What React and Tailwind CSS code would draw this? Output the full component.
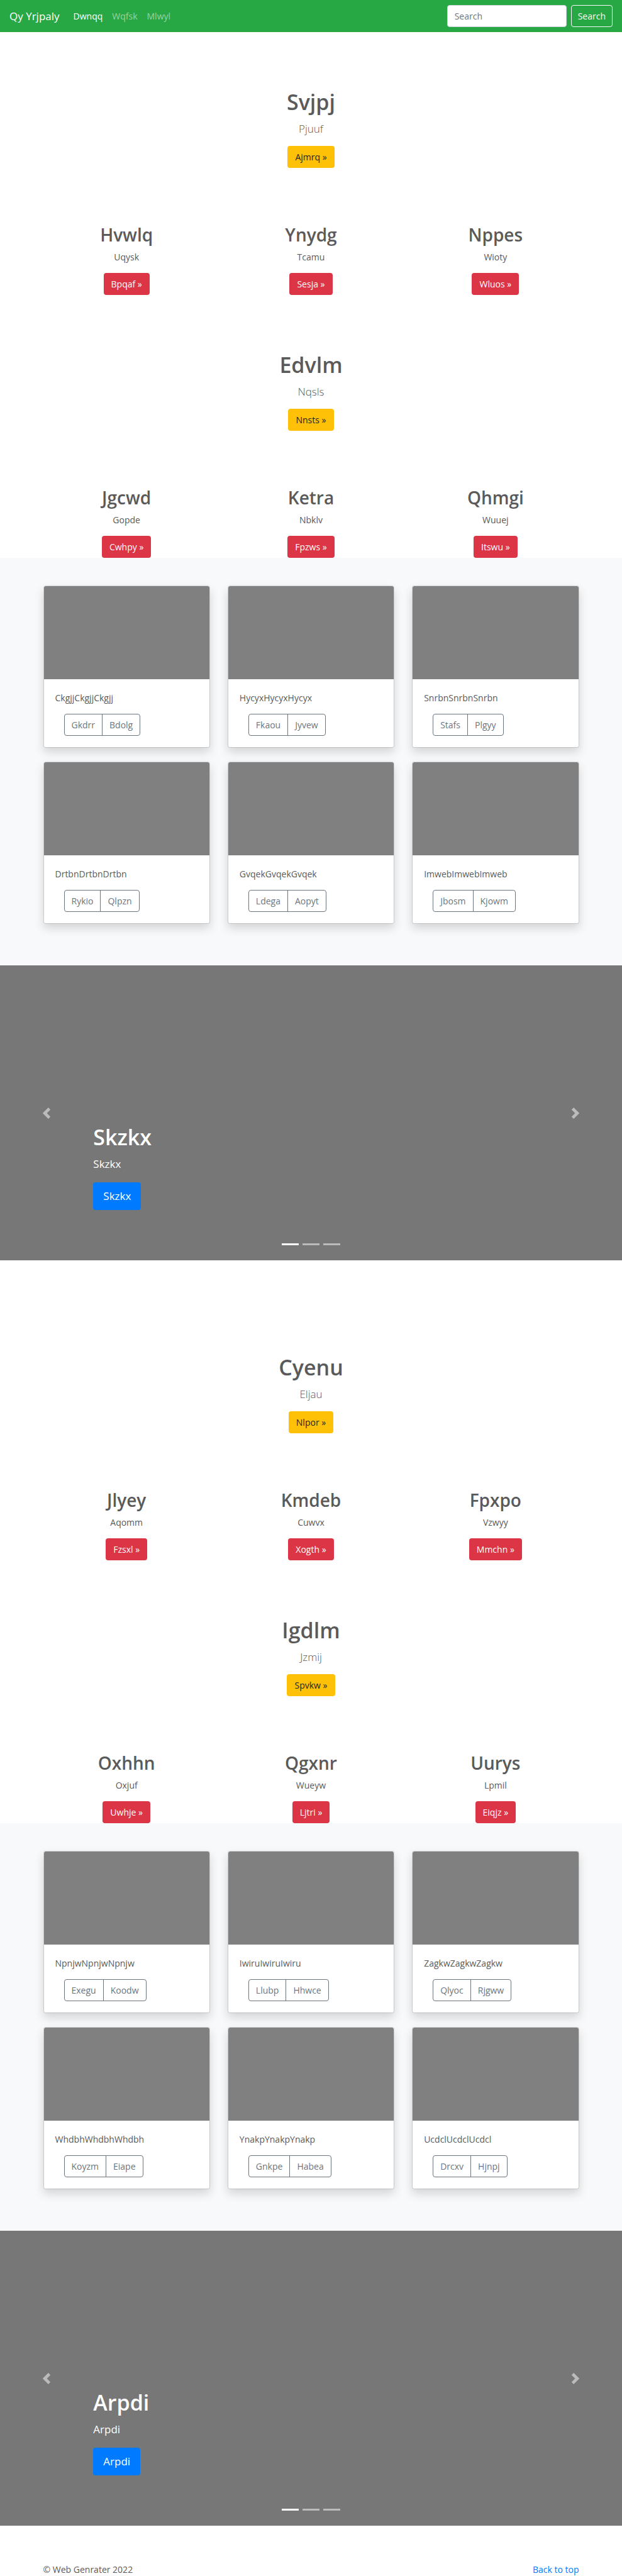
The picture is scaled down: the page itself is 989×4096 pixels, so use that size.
const sections = [
  {
    features: [
      {
        title: 'Svjpj', lead: 'Pjuuf', action: 'Ajmrq',
        columns: [['Hvwlq', 'Uqysk', 'Bpqaf'], ['Ynydg', 'Tcamu', 'Sesja'], ['Nppes', 'Wioty', 'Wluos']],
      },
      {
        title: 'Edvlm', lead: 'Nqsls', action: 'Nnsts',
        columns: [['Jgcwd', 'Gopde', 'Cwhpy'], ['Ketra', 'Nbklv', 'Fpzws'], ['Qhmgi', 'Wuuej', 'Itswu']],
      },
    ],
    cards: [
      ['CkgjjCkgjjCkgjj', 'Gkdrr', 'Bdolg'], ['HycyxHycyxHycyx', 'Fkaou', 'Jyvew'], ['SnrbnSnrbnSnrbn', 'Stafs', 'Plgyy'],
      ['DrtbnDrtbnDrtbn', 'Rykio', 'Qlpzn'], ['GvqekGvqekGvqek', 'Ldega', 'Aopyt'], ['ImwebImwebImweb', 'Jbosm', 'Kjowm'],
    ],
    slide: 'Skzkx',
  },
  {
    features: [
      {
        title: 'Cyenu', lead: 'Eljau', action: 'Nlpor',
        columns: [['Jlyey', 'Aqomm', 'Fzsxl'], ['Kmdeb', 'Cuwvx', 'Xogth'], ['Fpxpo', 'Vzwyy', 'Mmchn']],
      },
      {
        title: 'Igdlm', lead: 'Jzmij', action: 'Spvkw',
        columns: [['Oxhhn', 'Oxjuf', 'Uwhje'], ['Qgxnr', 'Wueyw', 'Ljtri'], ['Uurys', 'Lpmil', 'Eiqjz']],
      },
    ],
    cards: [
      ['NpnjwNpnjwNpnjw', 'Exegu', 'Koodw'], ['IwiruIwiruIwiru', 'Llubp', 'Hhwce'], ['ZagkwZagkwZagkw', 'Qlyoc', 'Rjgww'],
      ['WhdbhWhdbhWhdbh', 'Koyzm', 'Eiape'], ['YnakpYnakpYnakp', 'Gnkpe', 'Habea'], ['UcdclUcdclUcdcl', 'Drcxv', 'Hjnpj'],
    ],
    slide: 'Arpdi',
  },
];

function Navbar() {
  return (
    <nav className="flex h-[51px] items-center bg-[#28a745] px-[15px] text-white">
      <a href="#" className="mr-[22px] text-[17px] leading-[27px]">Qy Yrjpaly</a>
      <ul className="flex gap-[15px]">
        <li><a href="#" className="text-white">Dwnqq</a></li>
        <li><a href="#" className="text-white/50">Wqfsk</a></li>
        <li><a href="#" className="text-white/50">Mlwyl</a></li>
      </ul>
      <form className="ml-auto flex gap-[7px]" onSubmit={(e) => e.preventDefault()}>
        <input
          type="search"
          aria-label="Search"
          placeholder="Search"
          className="h-[35px] w-[190px] rounded-sm border border-[#ced4da] bg-white px-[11px] text-[#495057] placeholder:text-[#6c757d]"
        />
        <button type="submit" className="h-[35px] rounded-sm border border-[#f8f9fa] px-[10px] text-[#f8f9fa]">Search</button>
      </form>
    </nav>
  );
}

function Feature({ title, lead, action, columns }) {
  return (
    <section className="text-center">
      <div className="flex flex-col items-center pt-[89px]">
        <h1 className="mb-[7px] text-[34px] leading-[44px] font-semibold">{title}</h1>
        <p className="mb-[14px] text-[17px] leading-[27px] font-light">{lead}</p>
        <a href="#" className="h-[35px] rounded-sm bg-[#ffc107] px-[12px] leading-[35px] text-[#212529]">{action} »</a>
      </div>
      <div className="mx-auto grid max-w-[852px] grid-cols-3 gap-[28px] pt-[89px]">
        {columns.map(([heading, text, link]) => (
          <div key={heading} className="flex flex-col items-center">
            <h2 className="mb-[7px] text-[28px] leading-[35px] font-semibold">{heading}</h2>
            <p className="mb-[14px]">{text}</p>
            <a href="#" className="h-[35px] rounded-sm bg-[#dc3545] px-[12px] leading-[35px] text-white">{link} »</a>
          </div>
        ))}
      </div>
    </section>
  );
}

function Cards({ cards }) {
  return (
    <section className="bg-[#f8f9fa] pt-[44px] pb-[66px]">
      <div className="mx-auto grid max-w-[852px] grid-cols-3 gap-x-[28px] gap-y-[22px]">
        {cards.map(([text, first, second]) => (
          <article key={text} className="rounded-sm border border-black/12 bg-white bg-clip-padding shadow-[0_7px_15px_rgba(0,0,0,0.15)]">
            <div className="h-[148px] rounded-t-[3px] bg-[#808080]" />
            <div className="px-[18px] pt-[19px] pb-[18px]">
              <p className="mb-[14px]">{text}</p>
              <div className="ml-[14px] flex text-[#6c757d]">
                <button type="button" className="h-[35px] rounded-l-sm border border-[#6c757d] px-[11px]">{first}</button>
                <button type="button" className="-ml-px h-[35px] rounded-r-sm border border-[#6c757d] px-[11px]">{second}</button>
              </div>
            </div>
          </article>
        ))}
      </div>
    </section>
  );
}

function Carousel({ label }) {
  return (
    <section className="relative mb-[59px] flex h-[469px] flex-col items-start justify-end bg-[#777] px-[15%] pb-[80px] text-white">
      <h1 className="mb-[7px] text-[34px] leading-[44px] font-semibold">{label}</h1>
      <p className="mb-[16px] text-[17px] leading-[27px]">{label}</p>
      <a href="#" className="h-[44px] rounded-[4px] bg-[#007bff] px-[16px] text-[17px] leading-[44px]">{label}</a>
      <button type="button" aria-label="Previous" className="absolute inset-y-0 left-0 flex w-[15%] items-center justify-center opacity-50">
        <svg viewBox="0 0 8 8" className="size-[18px] fill-white"><path d="M5.25 0l-4 4 4 4 1.5-1.5-2.5-2.5 2.5-2.5-1.5-1.5z" /></svg>
      </button>
      <button type="button" aria-label="Next" className="absolute inset-y-0 right-0 flex w-[15%] items-center justify-center opacity-50">
        <svg viewBox="0 0 8 8" className="size-[18px] fill-white"><path d="M2.75 0l-1.5 1.5 2.5 2.5-2.5 2.5 1.5 1.5 4-4-4-4z" /></svg>
      </button>
      <div className="absolute inset-x-0 bottom-[24px] flex justify-center gap-[6px]">
        <button type="button" aria-label="Slide 1" className="h-[3px] w-[27px] bg-white" />
        <button type="button" aria-label="Slide 2" className="h-[3px] w-[27px] bg-white/50" />
        <button type="button" aria-label="Slide 3" className="h-[3px] w-[27px] bg-white/50" />
      </div>
    </section>
  );
}

export default function App() {
  return (
    <div className="bg-white font-['Open_Sans',sans-serif] text-[14px] leading-[22px] text-[#5a5a5a]">
      <Navbar />
      <main>
        {sections.map(({ features, cards, slide }) => (
          <div key={slide}>
            {features.map((feature) => <Feature key={feature.title} {...feature} />)}
            <Cards cards={cards} />
            <Carousel label={slide} />
          </div>
        ))}
      </main>
      <footer className="mx-auto flex max-w-[852px] justify-between leading-[21px]">
        <p>© Web Genrater 2022</p>
        <a href="#" className="text-[#007bff]">Back to top</a>
      </footer>
    </div>
  );
}
